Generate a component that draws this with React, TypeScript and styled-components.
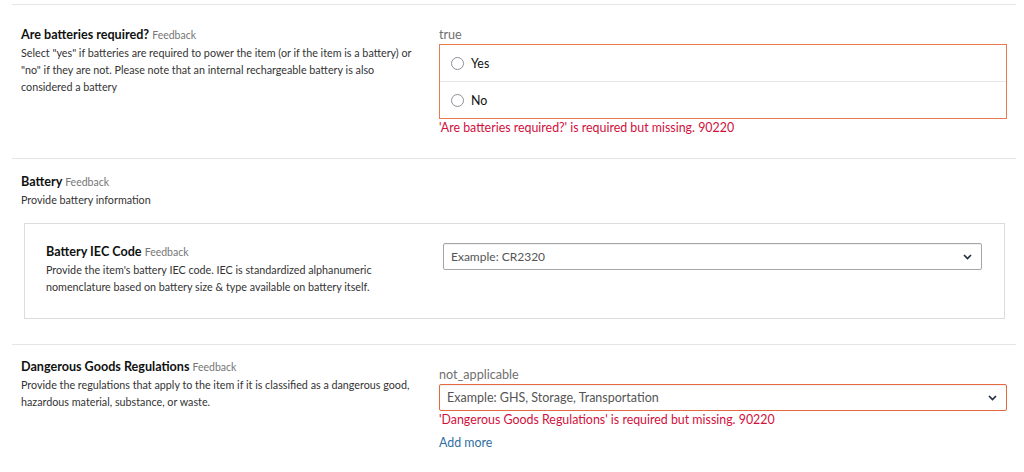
import styled, { createGlobalStyle } from 'styled-components';

const GlobalStyle = createGlobalStyle`
  body {
    margin: 0;
    background: #fff;
    font-family: Lato, "Liberation Sans", sans-serif;
    color: #0f1111;
  }
`;

const Chevron = () => (
  <svg width="9" height="6" viewBox="0 0 9 6">
    <path d="M1 1 L4.5 4.5 L8 1" fill="none" stroke="#232f3e" strokeWidth="1.7" />
  </svg>
);

const Field = ({ title, children }: { title: string; children: React.ReactNode }) => (
  <LeftCol>
    <Title>
      {title} <Feedback>Feedback</Feedback>
    </Title>
    <Desc>{children}</Desc>
  </LeftCol>
);

export default function App() {
  return (
    <>
      <GlobalStyle />
      <Page>
        <Section $pad="21px 9px 22px 9px">
          <Field title="Are batteries required?">
            Select "yes" if batteries are required to power the item (or if the item is a battery) or
            "no" if they are not. Please note that an internal rechargeable battery is also considered a
            battery
          </Field>
          <RightCol>
            <Value>true</Value>
            <RadioGroup>
              <RadioRow>
                <Circle />
                Yes
              </RadioRow>
              <RadioRow>
                <Circle />
                No
              </RadioRow>
            </RadioGroup>
            <Error>'Are batteries required?' is required but missing. 90220</Error>
          </RightCol>
        </Section>

        <Section $block $pad="14px 11px 25px 9px">
          <Field title="Battery">Provide battery information</Field>
          <InnerBox>
            <Field title="Battery IEC Code">
              Provide the item's battery IEC code. IEC is standardized alphanumeric nomenclature based on
              battery size &amp; type available on battery itself.
            </Field>
            <Select>
              <span>Example: CR2320</span>
              <Chevron />
            </Select>
          </InnerBox>
        </Section>

        <Section $pad="13px 9px 15px 9px">
          <Field title="Dangerous Goods Regulations">
            Provide the regulations that apply to the item if it is classified as a dangerous good,
            hazardous material, substance, or waste.
          </Field>
          <RightCol $offset={8}>
            <Value>not_applicable</Value>
            <Select $error $size={12.5}>
              <span>Example: GHS, Storage, Transportation</span>
              <Chevron />
            </Select>
            <Error>'Dangerous Goods Regulations' is required but missing. 90220</Error>
            <AddMore>Add more</AddMore>
          </RightCol>
        </Section>
      </Page>
    </>
  );
}

const Page = styled.div`
  padding: 4px 8px 0 12px;
`;

const Section = styled.section<{ $block?: boolean; $pad: string }>`
  border-top: 1px solid #e3e6e6;
  border-bottom: 1px solid #e3e6e6;
  margin-bottom: -1px;
  display: grid;
  grid-template-columns: ${(p) => (p.$block ? '1fr' : '418px 1fr')};
  padding: ${(p) => p.$pad};
`;

const LeftCol = styled.div`
  padding-right: 12px;
`;

const Title = styled.div`
  font-size: 12.6px;
  font-weight: 700;
  line-height: 18px;
  color: #0f1111;
`;

const Feedback = styled.span`
  font-size: 10.5px;
  font-weight: 400;
  color: #767676;
`;

const Desc = styled.div`
  font-size: 10.75px;
  line-height: 17px;
  color: #333;
`;

const RightCol = styled.div<{ $offset?: number }>`
  display: flex;
  flex-direction: column;
  padding-top: ${(p) => p.$offset ?? 0}px;
`;

const Value = styled.div`
  font-size: 12.6px;
  line-height: 18px;
  color: #6f6f6f;
`;

const RadioGroup = styled.div`
  border: 1px solid #ea7a50;
  display: flex;
  flex-direction: column;
`;

const RadioRow = styled.div`
  height: 36px;
  display: flex;
  align-items: center;
  gap: 7px;
  padding-left: 11px;
  font-size: 12.4px;
  color: #0f1111;
  & + & {
    border-top: 1px solid #e7e7e7;
  }
`;

const Circle = styled.span`
  width: 13px;
  height: 13px;
  border-radius: 50%;
  border: 1px solid #8d9096;
  box-sizing: border-box;
`;

const Error = styled.div`
  font-size: 12.4px;
  line-height: 16px;
  margin-top: 1px;
  color: #d1103c;
`;

const InnerBox = styled.div`
  margin-top: 15px;
  margin-left: 3px;
  border: 1px solid #dcdcdc;
  display: grid;
  grid-template-columns: 397px 1fr;
  padding: 19px 22px 23px 21px;
  align-items: start;
`;

const Select = styled.div<{ $error?: boolean; $size?: number }>`
  height: 27px;
  box-sizing: border-box;
  border: 1px solid ${(p) => (p.$error ? '#e5683f' : '#a6a6a6')};
  border-radius: 2px;
  display: flex;
  align-items: center;
  justify-content: space-between;
  padding: 0 9px 0 7px;
  font-size: ${(p) => p.$size ?? 12}px;
  color: #555;
  box-shadow: 0 1px 1px rgba(0, 0, 0, 0.06) inset;
`;

const AddMore = styled.div`
  margin-top: 7px;
  font-size: 12.4px;
  line-height: 16px;
  color: #2f6f9f;
`;
